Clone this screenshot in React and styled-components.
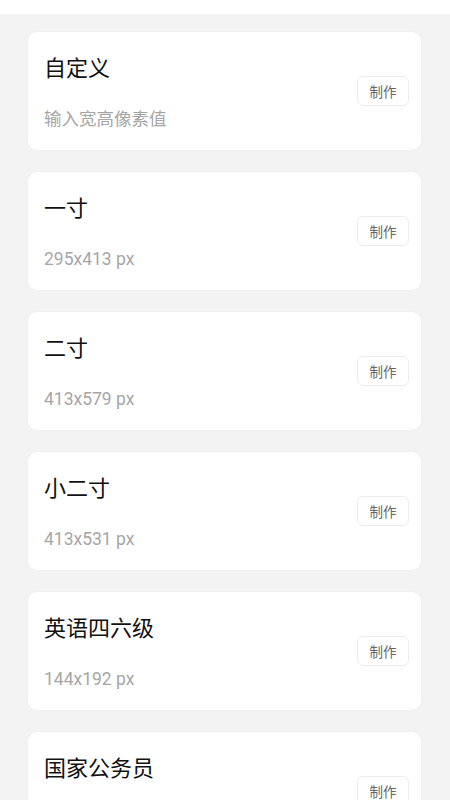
import React from "react";
import styled, { createGlobalStyle } from "styled-components";

const GlobalStyle = createGlobalStyle`
  html, body {
    margin: 0;
    padding: 0;
    background: #f3f3f3;
  }
  body {
    font-family: Roboto, "Noto Sans CJK SC", sans-serif;
  }
`;

const sizes = [
  { id: "custom", name: "自定义", desc: "输入宽高像素值" },
  { id: "1", name: "一寸", desc: "295x413 px" },
  { id: "2", name: "二寸", desc: "413x579 px" },
  { id: "s2", name: "小二寸", desc: "413x531 px" },
  { id: "cet", name: "英语四六级", desc: "144x192 px" },
  { id: "gwy", name: "国家公务员", desc: "" },
];

function App(props) {
  const { className } = props;

  return (
    <div className={className}>
      <GlobalStyle />
      <TopStrip />
      <List>
        {sizes.map((size) => (
          <Card key={size.id}>
            <Info>
              <Title>{size.name}</Title>
              <Desc>{size.desc || "\u00a0"}</Desc>
            </Info>
            <MakeButton>制作</MakeButton>
          </Card>
        ))}
      </List>
    </div>
  );
}

const TopStrip = styled.div`
  height: 14px;
  background: #ffffff;
`;

const List = styled.div`
  display: flex;
  flex-direction: column;
  gap: 22px;
  padding: 18px 29px 22px 28px;
`;

const Card = styled.div`
  display: flex;
  align-items: center;
  justify-content: space-between;
  height: 118px;
  box-sizing: border-box;
  padding: 0 12px 0 16px;
  background: #ffffff;
  border-radius: 9px;
  box-shadow: 0 0 2px rgba(0, 0, 0, 0.05);
`;

const Info = styled.div`
  display: flex;
  flex-direction: column;
  gap: 24px;
  padding-top: 4px;
`;

const Title = styled.div`
  font-size: 22px;
  line-height: 28px;
  color: #111111;
`;

const Desc = styled.div`
  font-size: 17.5px;
  line-height: 24px;
  color: #a6a6a6;
`;

const MakeButton = styled.button`
  width: 52px;
  height: 30px;
  padding: 0;
  border: 1px solid #ececec;
  border-radius: 6px;
  background: #ffffff;
  color: #666666;
  font-family: Roboto, "Noto Sans CJK SC", sans-serif;
  font-size: 13.5px;
`;

export default styled(App)`
  min-height: 100vh;
  background: #f3f3f3;
`;
